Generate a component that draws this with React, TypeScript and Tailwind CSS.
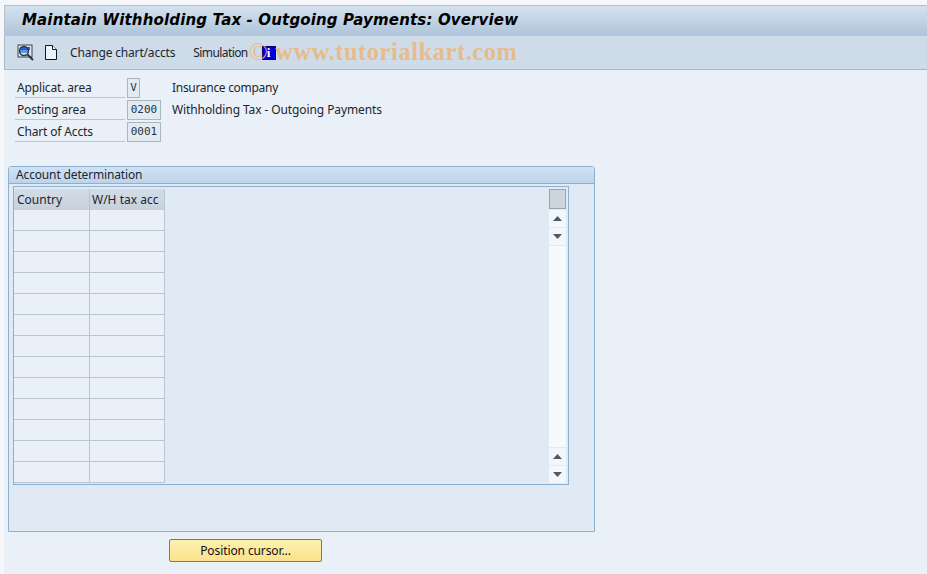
const ui = { fontFamily: '"Noto Sans", sans-serif' };

function ArrowUp() {
  return (
    <div className="flex h-[17px] w-[17px] items-center justify-center bg-[#f3f7fb]">
      <svg width="9" height="5" viewBox="0 0 9 5"><path d="M4.5 0 9 5H0z" fill="#4a5a68" /></svg>
    </div>
  );
}
function ArrowDown() {
  return (
    <div className="flex h-[17px] w-[17px] items-center justify-center bg-[#f3f7fb]">
      <svg width="9" height="5" viewBox="0 0 9 5"><path d="M0 0h9L4.5 5z" fill="#4a5a68" /></svg>
    </div>
  );
}

function Field({ label, value, desc, narrow }: { label: string; value: string; desc?: string; narrow?: boolean }) {
  return (
    <div className="flex h-[22px] items-start">
      <div className="flex h-[20px] w-[110px] items-center border-b border-[#b9c6d2] pl-[2px] text-[12px] tracking-[-0.15px] text-[#1c2630]">{label}</div>
      <div
        className={`ml-[2px] flex h-[20px] items-center justify-center border border-[#a9b6c2] bg-[#e3ebf2] text-[11px] text-[#2a343e] ${narrow ? 'w-[13px]' : 'w-[34px]'}`}
        style={{ fontFamily: '"DejaVu Sans Mono", monospace' }}
      >
        {value}
      </div>
      {desc && <div className={`flex h-[20px] items-center text-[12px] text-[#1c2630] ${narrow ? 'ml-[32px] tracking-[-0.3px]' : 'ml-[11px] tracking-[-0.1px]'}`}>{desc}</div>}
    </div>
  );
}

export default function App() {
  const rows = Array.from({ length: 13 });
  return (
    <div className="relative flex h-[574px] w-[927px] flex-col overflow-hidden bg-[#f5f7fa] pl-[4px] pt-[5px]" style={ui}>
      <div className="flex h-[31px] items-center border-l border-t border-[#b4c0cc] bg-gradient-to-b from-[#d4e2ee] to-[#aec4da] pb-[2px] pl-[17px]">
        <span className="text-[15px] font-bold italic leading-none tracking-[0.15px] text-black" style={{ fontFamily: '"DejaVu Sans", sans-serif' }}>Maintain Withholding Tax - Outgoing Payments: Overview</span>
      </div>
      <div className="flex h-[34px] items-center border-b border-l border-[#aab8c6] bg-[#cddce8] pl-[12px] text-[12px] text-[#1c2630]">
        <svg width="17" height="17" viewBox="0 0 17 17" className="mr-[10px]">
          <rect x="1" y="1" width="14" height="12" fill="#dfe6ec" stroke="#3a4650" />
          <rect x="3" y="3" width="10" height="3" fill="#2a62d0" />
          <rect x="3" y="6" width="8" height="3" fill="#5a94e8" />
          <circle cx="7" cy="7" r="4.5" fill="none" stroke="#2a3640" strokeWidth="1.4" />
          <path d="M10.5 10.5 16 16" stroke="#2a3640" strokeWidth="2" />
        </svg>
        <svg width="13" height="15" viewBox="0 0 13 15" className="mr-[13px]">
          <path d="M1.5.5h7l4 4v10h-11z" fill="#eaf3fb" stroke="#10181f" />
          <path d="M8.5.5v4h4" fill="#fff" stroke="#10181f" />
        </svg>
        <span className="tracking-[-0.17px]">Change chart/accts</span>
        <span className="ml-[18px] tracking-[-0.6px]">Simulation</span>
        <div className="ml-[14px] flex h-[14px] w-[14px] items-center justify-center border border-[#000080] bg-[#0000d8] text-[13px] font-bold leading-none text-white" style={{ fontFamily: '"Liberation Serif", serif' }}>i</div>
      </div>
      <div className="flex flex-1 flex-col bg-[#e9f0f7] pb-[1px] pl-[4px]">
        <div className="mt-[8px] flex flex-col pl-[7px]">
          <Field label="Applicat. area" value="V" desc="Insurance company" narrow />
          <Field label="Posting area" value="0200" desc="Withholding Tax - Outgoing Payments" />
          <Field label="Chart of Accts" value="0001" />
        </div>
        <div className="mt-[22px] flex h-[366px] w-[587px] flex-col rounded-t-[3px] border border-[#8eb0d0] bg-[#dfeaf4]">
          <div className="flex h-[17px] items-center border-b border-[#8eb0d0] bg-gradient-to-b from-[#d0e2f2] to-[#bcd4ea] pl-[7px] text-[12px] tracking-[-0.15px] text-[#1c2630]">Account determination</div>
          <div className="ml-[4px] mt-[2px] flex h-[299px] w-[556px] border border-[#8eb0d0] pb-[1px] pt-[2px]">
            <div className="flex w-[151px] flex-col">
              <div className="flex h-[21px] text-[12px] text-[#1c2630]">
                <div className="flex w-[76px] items-center border-r border-[#b9c6d2] bg-gradient-to-b from-[#d3dde6] to-[#c6d1dc] pl-[3px]">Country</div>
                <div className="flex w-[75px] items-center border-r border-[#b9c6d2] bg-gradient-to-b from-[#d3dde6] to-[#c6d1dc] pl-[2px]">W/H tax acc</div>
              </div>
              {rows.map((_, i) => (
                <div key={i} className="flex h-[21px]">
                  <div className="w-[76px] border-b border-r border-[#b9c6d2] bg-[#e9f0f7]" />
                  <div className="w-[75px] border-b border-r border-[#b9c6d2] bg-[#e9f0f7]" />
                </div>
              ))}
            </div>
            <div className="ml-auto mr-[2px] flex w-[17px] flex-col gap-[1px]">
              <div className="h-[20px] border border-[#9aa4ae] bg-[#cdd4dc]" />
              <ArrowUp />
              <ArrowDown />
              <div className="flex-1 bg-[#f7fafd]" />
              <ArrowUp />
              <ArrowDown />
            </div>
          </div>
        </div>
        <div className="ml-[161px] mt-[7px] flex h-[23px] w-[153px] items-center justify-center rounded-[2px] border border-[#7d7a62] bg-gradient-to-b from-[#fdf0b0] to-[#fbe28c] text-[12px] tracking-[-0.1px] text-[#101010]">Position cursor...</div>
      </div>
      <div className="pointer-events-none absolute left-[249px] top-[38px] text-[24.5px] font-bold leading-[28px] tracking-[0.55px] text-[#e8bb8c]" style={{ fontFamily: '"Liberation Serif", serif' }}>
        <span className="mr-[7px] font-normal">©</span>www.tutorialkart.com
      </div>
    </div>
  );
}
